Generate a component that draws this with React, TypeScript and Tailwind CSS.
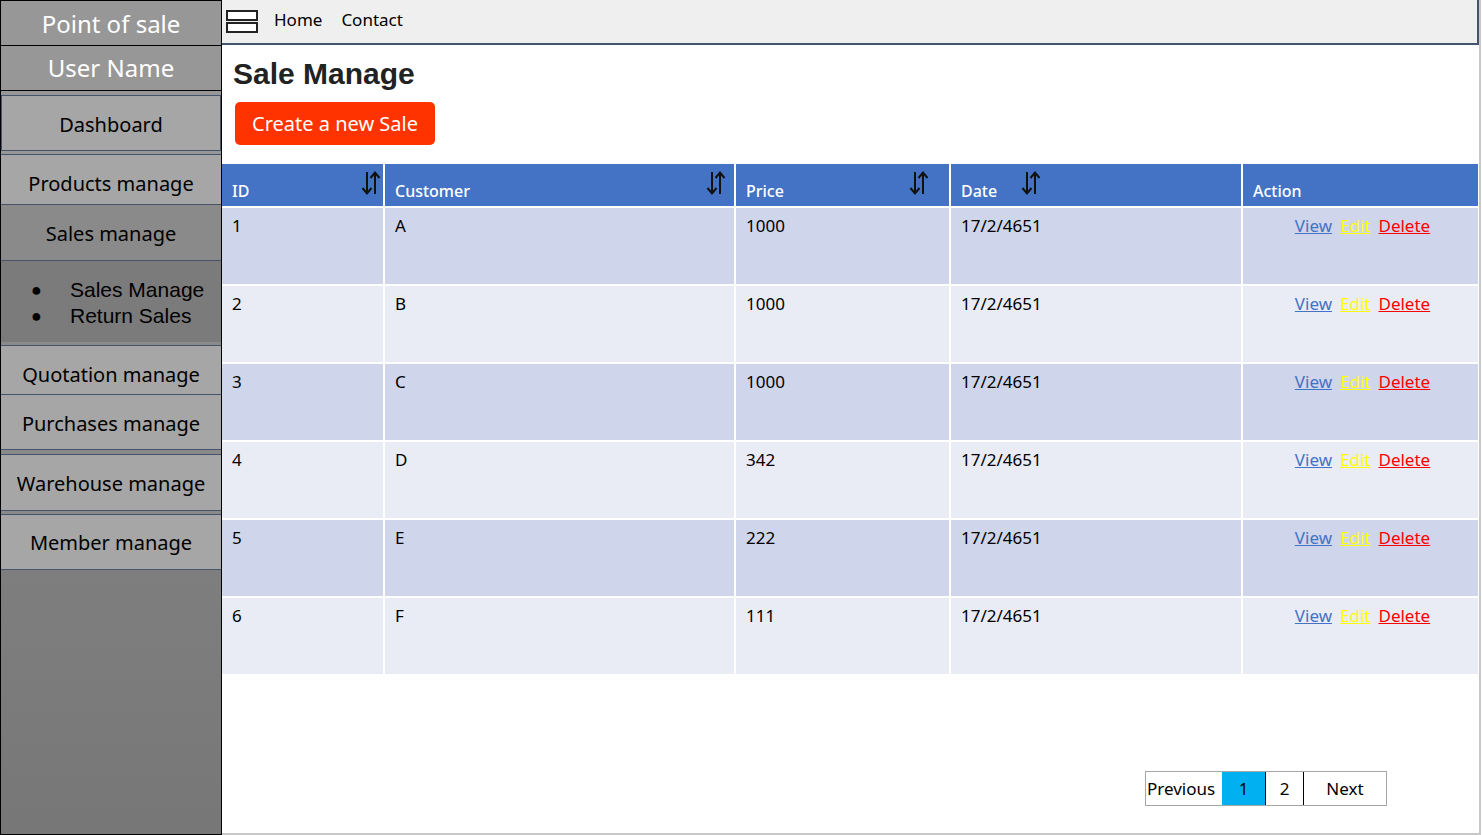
import React from "react";

const rows = [
  { id: "1", c: "A", p: "1000", d: "17/2/4651" },
  { id: "2", c: "B", p: "1000", d: "17/2/4651" },
  { id: "3", c: "C", p: "1000", d: "17/2/4651" },
  { id: "4", c: "D", p: "342", d: "17/2/4651" },
  { id: "5", c: "E", p: "222", d: "17/2/4651" },
  { id: "6", c: "F", p: "111", d: "17/2/4651" },
];

function SortIcon() {
  return (
    <svg width="20" height="26" viewBox="0 0 20 26" fill="none" stroke="#111" strokeWidth="2">
      <path d="M6 2 V23" />
      <path d="M1.5 18 L6 23.5 L10.5 18" />
      <path d="M14 24 V3" />
      <path d="M9.5 8 L14 2.5 L18.5 8" />
    </svg>
  );
}

const sans = { fontFamily: '"Noto Sans", "Open Sans", sans-serif' };

export default function App() {
  return (
    <div className="w-[1482px] h-[835px] flex bg-white overflow-hidden" style={sans}>
      {/* Sidebar */}
      <div className="w-[222px] h-[835px] flex flex-col border border-black bg-gradient-to-b from-[#8e8e8e] to-[#777777]">
        <div className="h-[45px] bg-[#979797] border-b border-black flex items-center justify-center text-white text-[24px] pt-[2px]">
          Point of sale
        </div>
        <div className="h-[45px] bg-[#979797] border-b border-black flex items-center justify-center text-white text-[24px]">
          User Name
        </div>
        <div className="h-[4px] bg-[#979797]" />
        <div className="h-[56px] bg-[#a6a6a6] border border-[#44546a] flex items-center justify-center text-black text-[20px] pt-[3px]">
          Dashboard
        </div>
        <div className="h-[4px] bg-[#979797] border-b border-[#44546a]" />
        <div className="h-[50px] bg-[#a6a6a6] border-b border-[#44546a] flex items-center justify-center text-black text-[20px] pt-[8px]">
          Products manage
        </div>
        <div className="h-[56px] bg-[#8a8a8a] border-b border-[#44546a] flex items-center justify-center text-black text-[20px] pt-[3px]">
          Sales manage
        </div>
        <div className="h-[81px] bg-[#7b7b7b] flex flex-col justify-center pl-[30px] pt-[2px] text-black text-[21px] leading-[26px]" style={{ fontFamily: '"Liberation Sans", Arial, sans-serif' }}>
          <div className="flex items-center"><span className="w-[39px] text-[18px]">●</span>Sales Manage</div>
          <div className="flex items-center"><span className="w-[39px] text-[18px]">●</span>Return Sales</div>
        </div>
        <div className="h-[4px] bg-[#8a8a8a] border-b border-[#44546a]" />
        <div className="h-[49px] bg-[#a6a6a6] border-b border-[#44546a] flex items-center justify-center text-black text-[20px] pt-[9px]">
          Quotation manage
        </div>
        <div className="h-[55px] bg-[#a6a6a6] border-b border-[#44546a] flex items-center justify-center text-black text-[20px] pt-[3px]">
          Purchases manage
        </div>
        <div className="h-[4px] bg-[#8a8a8a]" />
        <div className="h-[57px] bg-[#a6a6a6] border-y border-[#44546a] flex items-center justify-center text-black text-[20px] pt-[2px]">
          Warehouse manage
        </div>
        <div className="h-[3px] bg-[#8a8a8a]" />
        <div className="h-[56px] bg-[#a6a6a6] border-y border-[#44546a] flex items-center justify-center text-black text-[20px] pt-[2px]">
          Member manage
        </div>
      </div>

      {/* Main */}
      <div className="w-[1259px] h-[835px] flex flex-col border-r-2 border-b-2 border-[#c8c8c8]">
        <div className="h-[45px] bg-[#efefef] border-b-2 border-r-2 border-[#44546a] flex items-center gap-[16px] pl-[4px] pb-[3px] text-[17px] text-black">
          <svg width="32" height="24" viewBox="0 0 32 24" className="mt-[3px]">
            <rect x="1" y="1" width="30" height="9" fill="#fff" stroke="#222" strokeWidth="2" />
            <rect x="1" y="13" width="30" height="9" fill="#fff" stroke="#222" strokeWidth="2" />
          </svg>
          <span>Home</span>
          <span className="ml-[3px]">Contact</span>
        </div>

        <div className="pl-[11px] pt-[9px] text-[30px] font-bold text-[#222] leading-[40px]" style={{ fontFamily: '"Liberation Sans", Arial, sans-serif' }}>
          Sale Manage
        </div>
        <div className="pl-[13px] pt-[8px]">
          <button className="w-[200px] h-[43px] rounded-[5px] bg-[#ff3300] text-white text-[20px] flex items-center justify-center">
            Create a new Sale
          </button>
        </div>

        <div className="mt-[19px] grid grid-cols-[161px_349px_213px_290px_235px] gap-[2px] bg-white w-[1256px]">
          {/* header */}
          <div className="h-[42px] bg-[#4472c4] text-white text-[16px] font-medium flex items-end justify-between pl-[10px] pr-[2px] pb-[3px]">
            <span>ID</span>
            <span className="self-start mt-[6px]"><SortIcon /></span>
          </div>
          <div className="h-[42px] bg-[#4472c4] text-white text-[16px] font-medium flex items-end justify-between pl-[10px] pr-[8px] pb-[3px]">
            <span>Customer</span>
            <span className="self-start mt-[6px]"><SortIcon /></span>
          </div>
          <div className="h-[42px] bg-[#4472c4] text-white text-[16px] font-medium flex items-end justify-between pl-[10px] pr-[20px] pb-[3px]">
            <span>Price</span>
            <span className="self-start mt-[6px]"><SortIcon /></span>
          </div>
          <div className="h-[42px] bg-[#4472c4] text-white text-[16px] font-medium flex items-end pl-[10px] pb-[3px]">
            <span>Date</span>
            <span className="self-start mt-[6px] ml-[24px]"><SortIcon /></span>
          </div>
          <div className="h-[42px] bg-[#4472c4] text-white text-[16px] font-medium flex items-end pl-[10px] pb-[3px]">
            <span>Action</span>
          </div>

          {rows.map((r, i) => {
            const bg = i % 2 === 0 ? "bg-[#cfd5ea]" : "bg-[#e9ebf5]";
            const cell = `h-[76px] ${bg} pl-[10px] pt-[5px] text-[17px] text-black`;
            return (
              <React.Fragment key={r.id}>
                <div className={cell}>{r.id}</div>
                <div className={cell}>{r.c}</div>
                <div className={cell}>{r.p}</div>
                <div className={cell}>{r.d}</div>
                <div className={`h-[76px] ${bg} pt-[5px] text-[17px] flex justify-center gap-[8px] pl-[4px]`}>
                  <span className="underline text-[#4472c4]">View</span>
                  <span className="underline text-[#ffff00]">Edit</span>
                  <span className="underline text-[#ff0000]">Delete</span>
                </div>
              </React.Fragment>
            );
          })}
        </div>

        <div className="flex-1" />
        <div className="flex justify-end pr-[92px] pb-[27px]">
          <div className="flex h-[35px] border border-[#a6a6a6] text-[17px] text-black">
            <div className="w-[76px] flex items-center pl-[1px]">Previous</div>
            <div className="w-[44px] bg-[#00b0f0] border-r border-black flex items-center justify-center">1</div>
            <div className="w-[38px] border-r border-black flex items-center justify-center">2</div>
            <div className="w-[82px] flex items-center justify-center">Next</div>
          </div>
        </div>
      </div>
    </div>
  );
}
